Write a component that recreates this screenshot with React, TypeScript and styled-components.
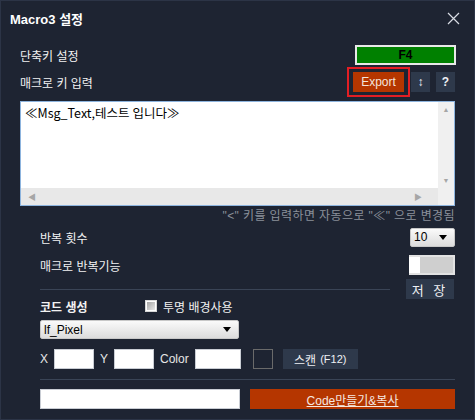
import React from 'react'
import styled, { createGlobalStyle, css } from 'styled-components'

const GlobalStyle = createGlobalStyle`
  html, body {
    margin: 0;
    padding: 0;
    background: #1e2432;
  }
  * {
    box-sizing: border-box;
  }
`

const fontStack = `"Liberation Sans", "Noto Sans CJK KR", sans-serif`

const Window = styled.div`
  width: 475px;
  height: 420px;
  background: #1e2432;
  border: 1px solid #2c3446;
  font-family: ${fontStack};
  font-size: 12px;
  color: #f2f2f2;
  display: flex;
  flex-direction: column;
  overflow: hidden;
`

const TitleBar = styled.div`
  height: 35px;
  display: flex;
  align-items: center;
  justify-content: space-between;
  padding: 0 14px 0 9px;
`

const Title = styled.div`
  font-size: 13px;
  font-weight: 700;
  color: #ffffff;
`

const Body = styled.div`
  padding: 0 19px;
  display: flex;
  flex-direction: column;
`

const Row = styled.div<{ $h: number; $mt?: number }>`
  height: ${(p) => p.$h}px;
  margin-top: ${(p) => p.$mt ?? 0}px;
  display: flex;
  align-items: center;
  justify-content: space-between;
`

const Label = styled.span`
  font-size: 12px;
  color: #f2f2f2;
  white-space: nowrap;
`

const KeyBox = styled.div`
  width: 101px;
  height: 20px;
  background: #008000;
  border: 2px solid #e8e8e8;
  color: #000;
  font-weight: 700;
  font-size: 12px;
  display: flex;
  align-items: center;
  justify-content: center;
  margin-right: -1px;
`

const Tools = styled.div`
  display: flex;
  align-items: center;
  gap: 6px;
`

const Highlight = styled.div`
  border: 2px solid #e31e24;
  padding: 3px 4px;
  display: flex;
  margin-right: -5px;
`

const darkBtn = css`
  background: #2e394b;
  color: #eef0f4;
  border: none;
  display: flex;
  align-items: center;
  justify-content: center;
  font-family: ${fontStack};
`

const ExportBtn = styled.div`
  width: 51px;
  height: 20px;
  background: #b53600;
  color: #f4e4dc;
  font-size: 12px;
  display: flex;
  align-items: center;
  justify-content: center;
`

const SmallBtn = styled.div`
  ${darkBtn}
  width: 19px;
  height: 20px;
  font-size: 12px;
  font-weight: 700;
`

const TextBox = styled.div`
  margin-top: 4px;
  height: 105px;
  border: 1px solid #8db4de;
  background: #ffffff;
  display: grid;
  grid-template-columns: 1fr 16px;
  grid-template-rows: 1fr 17px;
`

const TextContent = styled.div`
  padding: 4px 0 0 4px;
  color: #000;
  font-size: 12.5px;
  font-family: "Noto Sans CJK KR", sans-serif;
  line-height: 14px;
`

const VScroll = styled.div`
  background: #f0f0f0;
  display: flex;
  flex-direction: column;
  justify-content: space-between;
  align-items: center;
  padding: 4px 0;
  color: #a6a6a6;
  font-size: 7px;
`

const HScroll = styled.div`
  background: #e8e8e8;
  display: flex;
  justify-content: space-between;
  align-items: center;
  padding: 0 16px 0 7px;
  color: #a6a6a6;
  font-size: 8px;
`

const Corner = styled.div`
  background: #f0f0f0;
`

const Hint = styled.div`
  text-align: right;
  color: #8b909a;
  font-size: 12px;
  letter-spacing: 0.4px;
  height: 16px;
  line-height: 16px;
  margin-top: 2px;
`

const Section = styled.div`
  padding-left: 20px;
  display: flex;
  flex-direction: column;
`

const DropDown = styled.div<{ $w: number }>`
  width: ${(p) => p.$w}px;
  height: 19px;
  border: 1px solid #c8c8c8;
  border-radius: 2px;
  background: linear-gradient(#fafafa, #dcdcdc);
  color: #000;
  font-size: 12px;
  display: flex;
  align-items: center;
  justify-content: space-between;
  padding: 0 7px 0 3px;
`

const Caret = styled.span`
  width: 0;
  height: 0;
  border-left: 4px solid transparent;
  border-right: 4px solid transparent;
  border-top: 5px solid #000;
`

const Toggle = styled.div`
  width: 46px;
  height: 20px;
  background: #cfcfcf;
  border: 2px solid #e2e2e2;
  border-left: none;
  display: flex;
`

const Knob = styled.div`
  width: 11px;
  height: 100%;
  background: #ffffff;
`

const DividerRow = styled.div`
  height: 20px;
  margin-top: 4px;
  display: flex;
  align-items: center;
  gap: 16px;
`

const Line = styled.div`
  flex: 1;
  height: 1px;
  background: #3a4456;
`

const SaveBtn = styled.div`
  ${darkBtn}
  width: 48px;
  height: 20px;
  font-size: 13px;
  letter-spacing: 3px;
  margin-right: 1px;
`

const CodeHead = styled.div`
  display: flex;
  align-items: center;
  height: 14px;
`

const Bold = styled.span`
  font-weight: 700;
  font-size: 12px;
  width: 105px;
`

const Check = styled.span`
  width: 12px;
  height: 12px;
  border: 1px solid #d8d8d8;
  background: linear-gradient(135deg, #9c9c9c, #f0f0f0);
  box-shadow: inset 0 0 0 1px #ffffff;
  margin-right: 6px;
`

const FieldRow = styled.div`
  display: flex;
  align-items: center;
  height: 20px;
  margin-top: 10px;
`

const FieldLabel = styled.span`
  color: #e6e6e6;
  font-size: 12px;
  margin-right: 6px;
`

const Input = styled.div<{ $w: number }>`
  width: ${(p) => p.$w}px;
  height: 20px;
  background: #ffffff;
  border: 1px solid #c9cdd4;
  margin-right: 6px;
`

const Swatch = styled.div`
  width: 20px;
  height: 20px;
  border: 1px solid #6a6a6a;
  margin: 0 10px 0 6px;
`

const ScanBtn = styled.div`
  ${darkBtn}
  width: 75px;
  height: 20px;
  font-size: 12px;
  gap: 4px;
`

const Paren = styled.span`
  font-size: 11px;
`

const BottomLine = styled.div`
  height: 1px;
  background: #3a4456;
  margin-top: 10px;
`

const BottomRow = styled.div`
  display: flex;
  align-items: center;
  gap: 10px;
  margin-top: 9px;
  height: 20px;
`

const MakeBtn = styled.div`
  flex: 1;
  height: 20px;
  background: #b53600;
  color: #f6e8e0;
  text-decoration: underline;
  font-size: 12px;
  display: flex;
  align-items: center;
  justify-content: center;
`

function CloseIcon() {
  return (
    <svg width="13" height="13" viewBox="0 0 13 13">
      <path d="M1 1 L12 12 M12 1 L1 12" stroke="#d8dce4" strokeWidth="1.2" />
    </svg>
  )
}

export default function App() {
  return (
    <>
      <GlobalStyle />
      <Window>
        <TitleBar>
          <Title>Macro3 설정</Title>
          <CloseIcon />
        </TitleBar>
        <Body>
          <Row $h={20} $mt={9}>
            <Label>단축키 설정</Label>
            <KeyBox>F4</KeyBox>
          </Row>
          <Row $h={30} $mt={2}>
            <Label>매크로 키 입력</Label>
            <Tools>
              <Highlight>
                <ExportBtn>Export</ExportBtn>
              </Highlight>
              <SmallBtn>↕</SmallBtn>
              <SmallBtn>?</SmallBtn>
            </Tools>
          </Row>
          <TextBox>
            <TextContent>≪Msg_Text,테스트 입니다≫</TextContent>
            <VScroll>
              <span>▲</span>
              <span>▼</span>
            </VScroll>
            <HScroll>
              <span>◀</span>
              <span>▶</span>
            </HScroll>
            <Corner />
          </TextBox>
          <Hint>"&lt;" 키를 입력하면 자동으로 "≪" 으로 변경됨</Hint>
          <Section>
            <Row $h={20} $mt={3}>
              <Label>반복 횟수</Label>
              <DropDown $w={45}>
                10 <Caret />
              </DropDown>
            </Row>
            <Row $h={20} $mt={8}>
              <Label>매크로 반복기능</Label>
              <Toggle>
                <Knob />
              </Toggle>
            </Row>
            <DividerRow>
              <Line />
              <SaveBtn>저 장</SaveBtn>
            </DividerRow>
            <CodeHead>
              <Bold>코드 생성</Bold>
              <Check />
              <Label>투명 배경사용</Label>
            </CodeHead>
            <DropDown $w={199} style={{ marginTop: 7 }}>
              lf_Pixel <Caret />
            </DropDown>
            <FieldRow>
              <FieldLabel>X</FieldLabel>
              <Input $w={40} />
              <FieldLabel>Y</FieldLabel>
              <Input $w={40} />
              <FieldLabel>Color</FieldLabel>
              <Input $w={46} />
              <Swatch />
              <ScanBtn>
                스캔 <Paren>(F12)</Paren>
              </ScanBtn>
            </FieldRow>
            <BottomLine />
            <BottomRow>
              <Input $w={200} style={{ marginRight: 0 }} />
              <MakeBtn>Code만들기&amp;복사</MakeBtn>
            </BottomRow>
          </Section>
        </Body>
      </Window>
    </>
  )
}
